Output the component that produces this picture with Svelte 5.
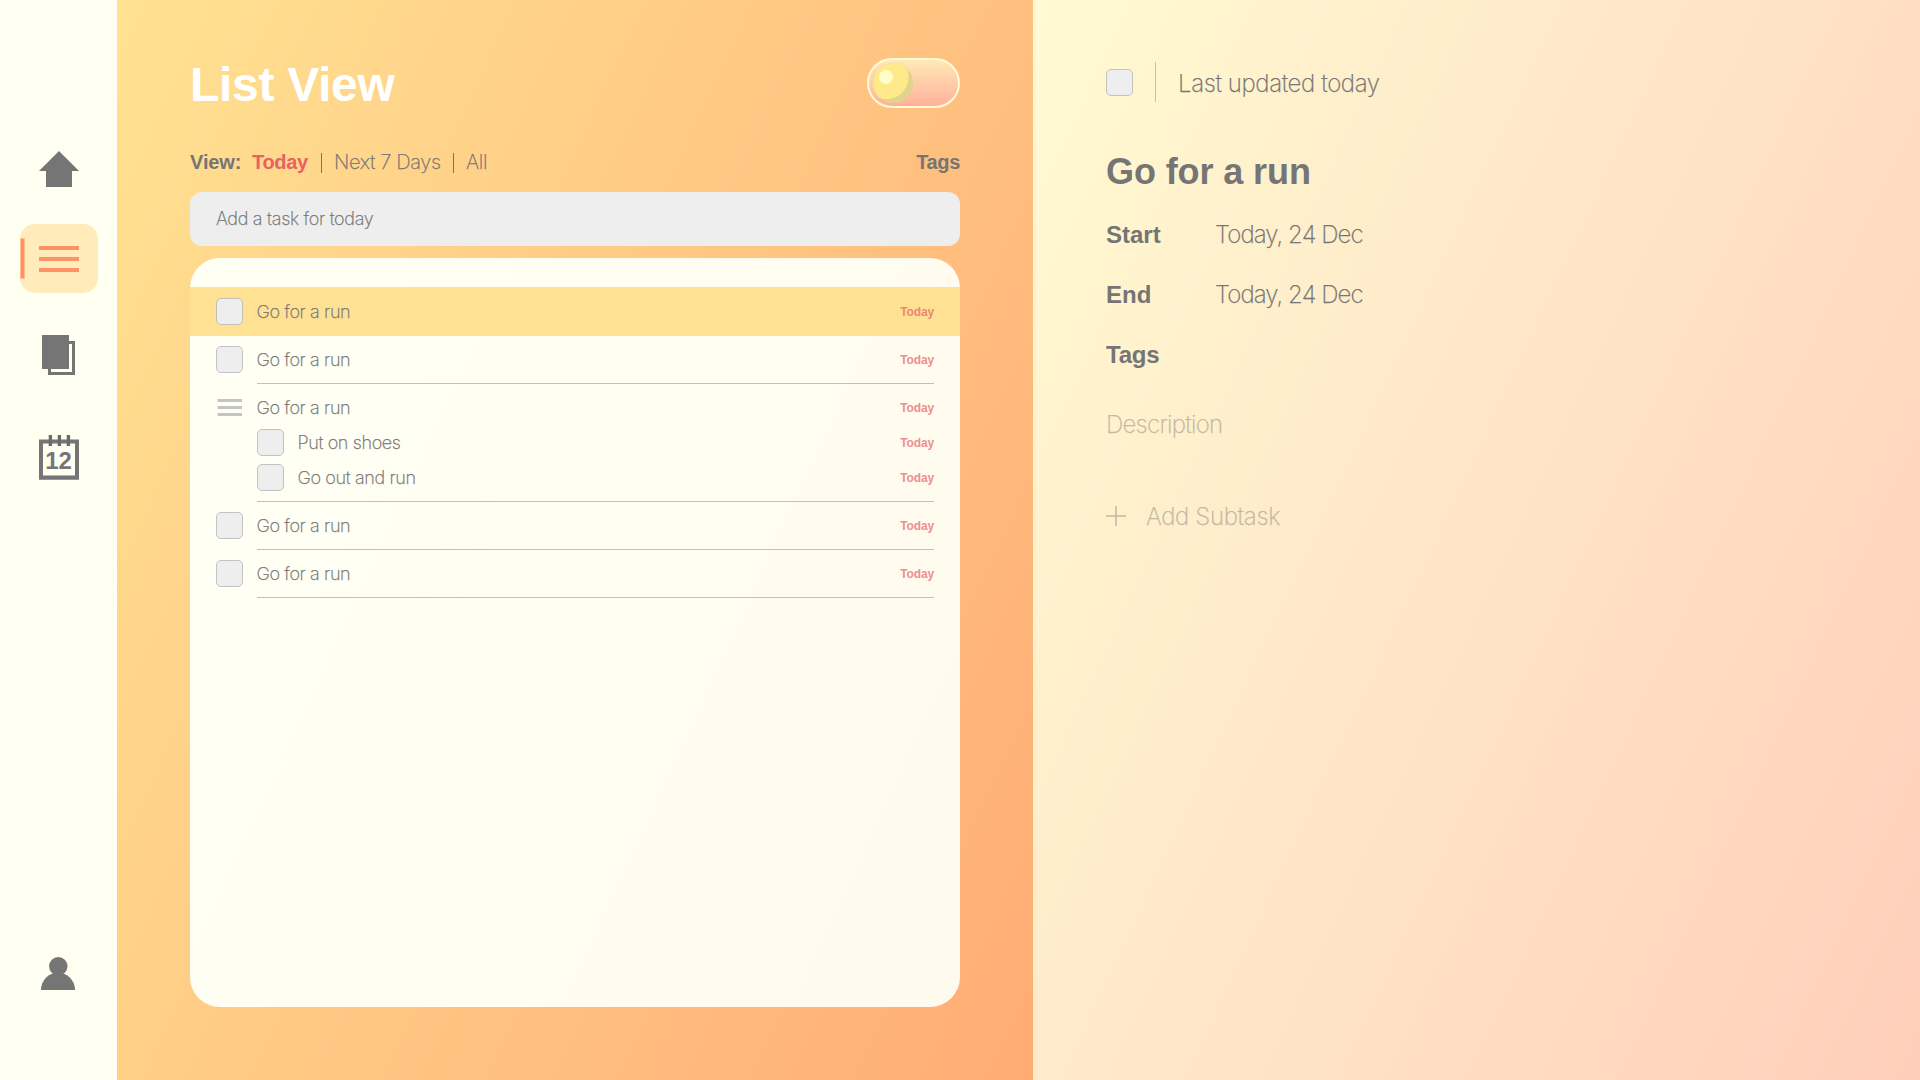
<script>
  const tasks = [
    { title: 'Go for a run', due: 'Today', selected: true },
    { title: 'Go for a run', due: 'Today' },
    {
      title: 'Go for a run',
      due: 'Today',
      subtasks: [
        { title: 'Put on shoes', due: 'Today' },
        { title: 'Go out and run', due: 'Today' }
      ]
    },
    { title: 'Go for a run', due: 'Today' },
    { title: 'Go for a run', due: 'Today' }
  ];
</script>

<div class="app">
  <nav class="sidebar">
    <svg class="icon home" width="40" height="36" viewBox="0 0 40 36">
      <path d="M20 0L40 20H33V36H7V20H0Z" />
    </svg>
    <div class="active">
      <svg width="78" height="69" viewBox="0 0 78 69">
        <path class="mark-edge" d="M0 14H5V55H0Z" />
        <path class="mark" d="M1 15H4V54H1Z" />
        <path class="mark" d="M19 22H59V26H19ZM19 33H59V37H19ZM19 44H59V48H19Z" />
      </svg>
    </div>
    <svg class="icon pages" width="33" height="40" viewBox="0 0 33 40">
      <path d="M0 0H27V34H0Z" />
      <path d="M27 6H33V40H6V34H9V37H30V9H27Z" />
    </svg>
    <div class="calendar">
      <svg width="40" height="45" viewBox="0 0 40 45">
        <path fill-rule="evenodd" d="M0 4.5H40V44.7H0ZM4 8.5V40.5H36V8.5Z" />
        <path class="rings" d="M9.7 0H13.1V11H9.7ZM18.7 0H22.1V11H18.7ZM27.7 0H31.1V11H27.7Z" />
      </svg>
      <span>12</span>
    </div>
    <svg class="icon person" width="34" height="33" viewBox="0 0 34 33">
      <circle cx="17.3" cy="9.2" r="9.2" />
      <path d="M0 33A17 17.4 0 0 1 34 33Z" />
    </svg>
  </nav>

  <main class="list">
    <header>
      <h1>List View</h1>
      <svg class="toggle" width="93" height="50" viewBox="0 0 93 50">
        <defs>
          <linearGradient id="sky" x1="0" y1="0" x2="0" y2="1">
            <stop offset="0" stop-color="#ffeab8" />
            <stop offset="1" stop-color="#ffb09a" />
          </linearGradient>
          <clipPath id="ball"><circle cx="26" cy="25" r="20" /></clipPath>
        </defs>
        <rect x="1" y="1" width="91" height="48" rx="24" fill="url(#sky)" stroke="#fffbd5" stroke-width="2" />
        <circle cx="26" cy="25" r="20" fill="#e0d38b" />
        <circle cx="19.3" cy="19" r="22.3" fill="#ffe98b" clip-path="url(#ball)" />
        <circle cx="19" cy="19" r="7" fill="#fffec8" />
      </svg>
    </header>

    <div class="filters">
      <strong class="label">View:</strong>
      <strong class="current">Today</strong>
      <i></i>
      <span class="week">Next 7 Days</span>
      <i></i>
      <span>All</span>
      <strong class="tags">Tags</strong>
    </div>

    <div class="add">Add a task for today</div>

    <section class="card">
      {#each tasks as task}
        <div class="task" class:selected={task.selected}>
          <div class="row">
            {#if task.subtasks}
              <svg class="lines" width="27" height="27" viewBox="0 0 27 27">
                <path d="M1.6 5H26V8H1.6ZM1.6 12H26V15H1.6ZM1.6 19H26V22H1.6Z" />
              </svg>
            {:else}
              <span class="box"></span>
            {/if}
            <span class="title">{task.title}</span>
            <span class="due">{task.due}</span>
          </div>
          {#each task.subtasks ?? [] as sub}
            <div class="row sub">
              <span class="box"></span>
              <span class="title">{sub.title}</span>
              <span class="due">{sub.due}</span>
            </div>
          {/each}
        </div>
      {/each}
    </section>
  </main>

  <aside class="detail">
    <div class="updated">
      <span class="box"></span>
      <i></i>
      <span class="when">Last updated today</span>
    </div>
    <h2>Go for a run</h2>
    <div class="field"><strong>Start</strong><span>Today, 24 Dec</span></div>
    <div class="field"><strong>End</strong><span>Today, 24 Dec</span></div>
    <div class="field"><strong class="tags">Tags</strong></div>
    <p class="description">Description</p>
    <p class="subtask">
      <svg width="20" height="20" viewBox="0 0 20 20"><path d="M0 10H20M10 0V20" /></svg>
      <span>Add Subtask</span>
    </p>
  </aside>
</div>

<style>
  :global(body) { margin: 0; }
  * { box-sizing: border-box; }
  .app {
    display: flex;
    width: 1920px;
    height: 1080px;
    overflow: hidden;
    color: #757575;
    font-family: Inter, "Liberation Sans", sans-serif;
    font-weight: 200;
    white-space: nowrap;
    -webkit-text-stroke: 0.25px;
  }
  h1, h2, strong, .due, .calendar span {
    margin: 0;
    font-family: "Liberation Sans", Arial, sans-serif;
    font-weight: 700;
    -webkit-text-stroke: 0;
  }
  p { margin: 0; }

  .sidebar {
    display: flex;
    flex-direction: column;
    width: 117px;
    padding-top: 151px;
    background: #fffff2;
  }
  .sidebar svg { display: block; fill: #757575; }
  .home { margin-left: 39px; }
  .active {
    width: 78px;
    height: 69px;
    margin: 37px 0 42px 20px;
    border-radius: 15px;
    background: #ffecba;
  }
  .active .mark { fill: #ff9166; }
  .active .mark-edge { fill: #ffbe90; }
  .pages { margin-left: 42px; }
  .calendar {
    display: grid;
    width: 40px;
    margin: 60px 0 0 39px;
  }
  .calendar svg, .calendar span { grid-area: 1 / 1; }
  .calendar .rings { fill: #6b6b6b; }
  .calendar span {
    padding: 12px 1px 0 0;
    font-size: 24px;
    line-height: 28px;
    text-align: center;
  }
  .person { margin: auto 0 90px 41px; }

  .list {
    width: 916px;
    padding: 58px 73px 0;
    background: linear-gradient(115deg, #ffe292, #ffac74);
  }
  header { display: flex; justify-content: space-between; height: 50px; }
  h1 {
    padding: 2px 0 0 0;
    color: #fff;
    font-size: 48px;
    line-height: 50px;
    letter-spacing: -0.3px;
  }
  .filters {
    display: flex;
    align-items: center;
    height: 24px;
    margin-top: 42px;
    font-size: 20px;
    line-height: 24px;
    letter-spacing: -0.34px;
  }
  .filters i { width: 1px; height: 20px; margin: 2px 12px 0 12px; background: #757575; }
  .filters .label { width: 62px; letter-spacing: -0.1px; }
  .filters .current { width: 57px; color: #e86165; letter-spacing: -0.3px; }
  .filters .week { width: 107px; }
  .filters .tags { margin-left: auto; }
  .add {
    height: 54px;
    margin-top: 18px;
    padding-left: 26px;
    border-radius: 12px;
    background: #eee;
    font-size: 18px;
    line-height: 54px;
    letter-spacing: -0.28px;
  }
  .card {
    height: 749px;
    margin-top: 12px;
    padding-top: 29px;
    border-radius: 30px;
    background: linear-gradient(115deg, #fffff3 20%, #fffaee 90%);
  }
  .task { padding: 10px 26px 0; }
  .task:not(.selected)::after {
    display: block;
    height: 1px;
    margin: 10px 0 0 41px;
    background: #c0c0c0;
    content: "";
  }
  .task.selected { height: 49px; padding-top: 11px; background: #ffe193; }
  .task.selected .box { border-color: #c4c0b8; }
  .row {
    display: flex;
    align-items: center;
    height: 27px;
    font-size: 18px;
    line-height: 27px;
    letter-spacing: -0.36px;
  }
  .sub { margin: 8px 0 0 41px; }
  .box {
    width: 27px;
    height: 27px;
    border: 1px solid #c2c2c2;
    border-radius: 5px;
    background: #eee;
  }
  .lines { fill: #c4c4c4; }
  .title { margin-left: 13.5px; }
  .due {
    margin-left: auto;
    padding-top: 1px;
    color: #e86165;
    font-size: 12px;
    letter-spacing: -0.15px;
    opacity: 0.7;
  }

  .detail {
    flex: 1;
    padding: 62px 0 0 73px;
    background: linear-gradient(115deg, #fffbd2, #ffceba);
    font-size: 24px;
    line-height: 30px;
  }
  .updated { display: flex; height: 40px; }
  .updated .box { margin-top: 7px; }
  .updated i { width: 1px; height: 40px; margin: 0 22px; background: #c4c0b0; }
  .when { padding-top: 7px; letter-spacing: -0.38px; }
  h2 { margin-top: 50px; font-size: 36px; line-height: 40px; letter-spacing: -0.1px; }
  .field { display: flex; height: 30px; margin-bottom: 30px; }
  h2 + .field { margin-top: 27px; }
  .field strong { width: 109px; line-height: 31px; }
  .field .tags { letter-spacing: -0.2px; }
  .field span { padding-top: 1px; letter-spacing: -0.9px; }
  .description { margin-top: 41px; letter-spacing: -0.7px; opacity: 0.45; }
  .subtask {
    display: flex;
    align-items: center;
    gap: 20px;
    margin-top: 61px;
    letter-spacing: -0.33px;
    opacity: 0.45;
  }
  .subtask span { padding-top: 2px; line-height: 28px; }
  .subtask svg { fill: none; stroke: #757575; stroke-width: 1.5; }
</style>
